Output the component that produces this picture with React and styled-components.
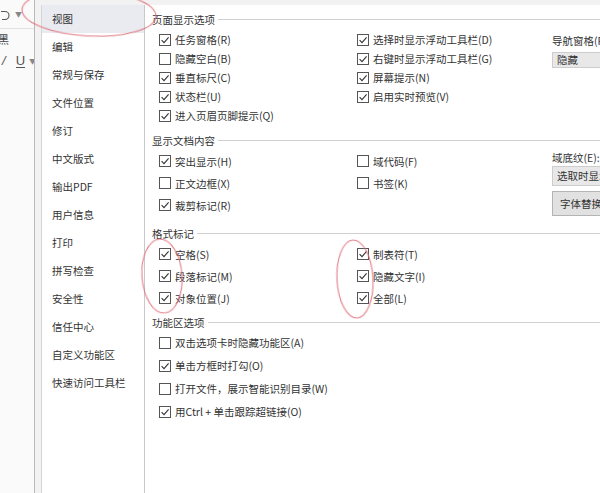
import React from "react";
import styled, { createGlobalStyle } from "styled-components";

const GlobalStyle = createGlobalStyle`
  html, body {
    margin: 0;
    padding: 0;
    background: #fff;
  }
`;

const Root = styled.div`
  position: relative;
  display: flex;
  width: 600px;
  height: 493px;
  overflow: hidden;
  background: #fff;
  font-family: "Noto Sans CJK SC", "Liberation Sans", sans-serif;
  font-size: 10.5px;
  color: #333;
`;

// bit of the Word ribbon still showing behind the dialog
const Ribbon = styled.div`
  flex: none;
  width: 35px;
  box-sizing: border-box;
  border-right: 1px solid #b9b9b9;
  background: #fafafa;
  display: flex;
  flex-direction: column;
  overflow: hidden;
`;

const RibbonRow = styled.div`
  height: ${p => p.$h}px;
  display: flex;
  align-items: center;
  gap: 4px;
  padding-left: ${p => p.$pad || 0}px;
  border-bottom: ${p => (p.$line ? "1px solid #e2e2e2" : "none")};
  color: #444;
  font-size: 11px;
`;

const Caret = styled.span`
  font-size: 7px;
  color: #888;
`;

const Underlined = styled.span`
  font-family: "Liberation Sans", sans-serif;
  font-size: 13px;
  color: #555;
  border-bottom: 1px solid #555;
  line-height: 12px;
  margin-left: ${p => p.$ml || 0}px;
`;

const Dialog = styled.div`
  flex: 1;
  display: flex;
  min-width: 0;
  padding: 5px 0 0 6px;
  background: #f2f2f2;
`;

const Nav = styled.div`
  flex: none;
  width: 104px;
  box-sizing: border-box;
  background: #fff;
  border-left: 1px solid #d6d6d6;
  border-right: 1px solid #c9c9c9;
`;

const NavItem = styled.div`
  height: 28px;
  line-height: 28px;
  padding-left: 10px;
  background: ${p => (p.$active ? "#e9ebf0" : "transparent")};
  white-space: nowrap;
`;

const Content = styled.div`
  flex: 1;
  min-width: 0;
  background: #fff;
  padding: 6px 0 0 7px;
`;

const Section = styled.div`
  margin-top: ${p => p.$top || 0}px;
`;

const Header = styled.div`
  display: flex;
  align-items: center;
  height: 16px;
  white-space: nowrap;

  &::after {
    content: "";
    flex: 1;
    margin-left: 3px;
    border-top: 1px solid #d0d0d0;
  }
`;

const Body = styled.div`
  display: grid;
  grid-template-columns: 198px 195px 1fr;
  padding: ${p => p.$pad || 0}px 0 0 7px;
`;

const Column = styled.div`
  display: flex;
  flex-direction: column;
  padding-top: ${p => p.$pad || 0}px;
  min-width: 0;
`;

const Row = styled.label`
  display: flex;
  align-items: center;
  height: ${p => p.$h}px;
  white-space: nowrap;
`;

const Box = styled.span`
  flex: none;
  width: 12px;
  height: 12px;
  box-sizing: border-box;
  border: 1px solid #555;
  background: #fff;
  margin-right: 4px;
  display: flex;
  align-items: center;
  justify-content: center;
`;

const FieldLabel = styled.div`
  height: ${p => p.$h}px;
  line-height: ${p => p.$h}px;
  white-space: nowrap;
`;

const Select = styled.div`
  width: 120px;
  height: ${p => p.$h}px;
  line-height: ${p => p.$h - 2}px;
  box-sizing: border-box;
  margin-top: ${p => p.$mt || 0}px;
  padding-left: 4px;
  background: #e8e8e8;
  border: 1px solid #cdcdcd;
  white-space: nowrap;
`;

const Button = styled.div`
  width: 120px;
  height: 25px;
  line-height: 23px;
  box-sizing: border-box;
  margin-top: 5px;
  padding-left: 7px;
  background: #e1e1e1;
  border: 1px solid #b4b4b4;
  white-space: nowrap;
`;

const Marks = styled.svg`
  position: absolute;
  left: 0;
  top: 0;
  pointer-events: none;
`;

const Check = ({ on, text, h }) => (
  <Row $h={h}>
    <Box>
      {on && (
        <svg width="10" height="10" viewBox="0 0 10 10">
          <path d="M1.6 5.2 L4 7.6 L8.6 2.4" fill="none" stroke="#333" strokeWidth="1.1" />
        </svg>
      )}
    </Box>
    {text}
  </Row>
);

const navItems = [
  "视图", "编辑", "常规与保存", "文件位置", "修订", "中文版式", "输出PDF",
  "用户信息", "打印", "拼写检查", "安全性", "信任中心", "自定义功能区", "快速访问工具栏",
];

const pageLeft = [
  [true, "任务窗格(R)"],
  [false, "隐藏空白(B)"],
  [true, "垂直标尺(C)"],
  [true, "状态栏(U)"],
  [true, "进入页眉页脚提示(Q)"],
];
const pageRight = [
  [true, "选择时显示浮动工具栏(D)"],
  [true, "右键时显示浮动工具栏(G)"],
  [true, "屏幕提示(N)"],
  [true, "启用实时预览(V)"],
];
const docLeft = [
  [true, "突出显示(H)"],
  [false, "正文边框(X)"],
  [true, "裁剪标记(R)"],
];
const docRight = [
  [false, "域代码(F)"],
  [false, "书签(K)"],
];
const markLeft = [
  [true, "空格(S)"],
  [true, "段落标记(M)"],
  [true, "对象位置(J)"],
];
const markRight = [
  [true, "制表符(T)"],
  [true, "隐藏文字(I)"],
  [true, "全部(L)"],
];
const ribbonOpts = [
  [false, "双击选项卡时隐藏功能区(A)"],
  [true, "单击方框时打勾(O)"],
  [false, "打开文件，展示智能识别目录(W)"],
  [true, "用Ctrl + 单击跟踪超链接(O)"],
];

const list = (items, h) =>
  items.map(([on, text]) => <Check key={text} on={on} text={text} h={h} />);

export default function App() {
  return (
    <Root>
      <GlobalStyle />
      <Ribbon>
        <RibbonRow $h={28} $line $pad={1}>
          <svg width="10" height="14" viewBox="0 0 10 14">
            <path d="M0 4.5 H4 a4 4 0 0 1 0 8 H1" fill="none" stroke="#555" strokeWidth="1.1" />
          </svg>
          <Caret>▼</Caret>
        </RibbonRow>
        <RibbonRow $h={20}>
          <span style={{ marginLeft: -2 }}>黑</span>
        </RibbonRow>
        <RibbonRow $h={24} $pad={2}>
          <Underlined as="i" style={{ border: "none" }}>/</Underlined>
          <Underlined $ml={6}>U</Underlined>
          <Caret>▼</Caret>
        </RibbonRow>
      </Ribbon>

      <Dialog>
        <Nav>
          {navItems.map((item, i) => (
            <NavItem key={item} $active={i === 0}>{item}</NavItem>
          ))}
        </Nav>

        <Content>
          <Section>
            <Header>页面显示选项</Header>
            <Body $pad={3}>
              <Column>{list(pageLeft, 19)}</Column>
              <Column>{list(pageRight, 19)}</Column>
              <Column $pad={2}>
                <FieldLabel $h={18}>导航窗格(P)</FieldLabel>
                <Select $h={16} $mt={2}>隐藏</Select>
              </Column>
            </Body>
          </Section>

          <Section $top={7}>
            <Header>显示文档内容</Header>
            <Body $pad={2}>
              <Column>{list(docLeft, 22)}</Column>
              <Column>{list(docRight, 22)}</Column>
              <Column>
                <FieldLabel $h={16}>域底纹(E):</FieldLabel>
                <Select $h={20}>选取时显示</Select>
                <Button>字体替换</Button>
              </Column>
            </Body>
          </Section>

          <Section $top={9}>
            <Header>格式标记</Header>
            <Body $pad={2}>
              <Column>{list(markLeft, 22)}</Column>
              <Column>{list(markRight, 22)}</Column>
            </Body>
          </Section>

          <Section $top={5}>
            <Header>功能区选项</Header>
            <Body $pad={1}>
              <Column>{list(ribbonOpts, 23)}</Column>
            </Body>
          </Section>
        </Content>
      </Dialog>

      {/* hand-drawn red annotation rings over the dialog */}
      <Marks width="600" height="493" viewBox="0 0 600 493">
        <g fill="none" stroke="#e0707c" strokeWidth="1.1" opacity="0.9">
          <ellipse cx="89" cy="13" rx="67" ry="23" transform="rotate(3 89 13)" />
          <ellipse cx="162" cy="276" rx="20" ry="37" transform="rotate(-4 162 276)" />
          <ellipse cx="355" cy="279" rx="18" ry="39" transform="rotate(-3 355 279)" />
        </g>
      </Marks>
    </Root>
  );
}
